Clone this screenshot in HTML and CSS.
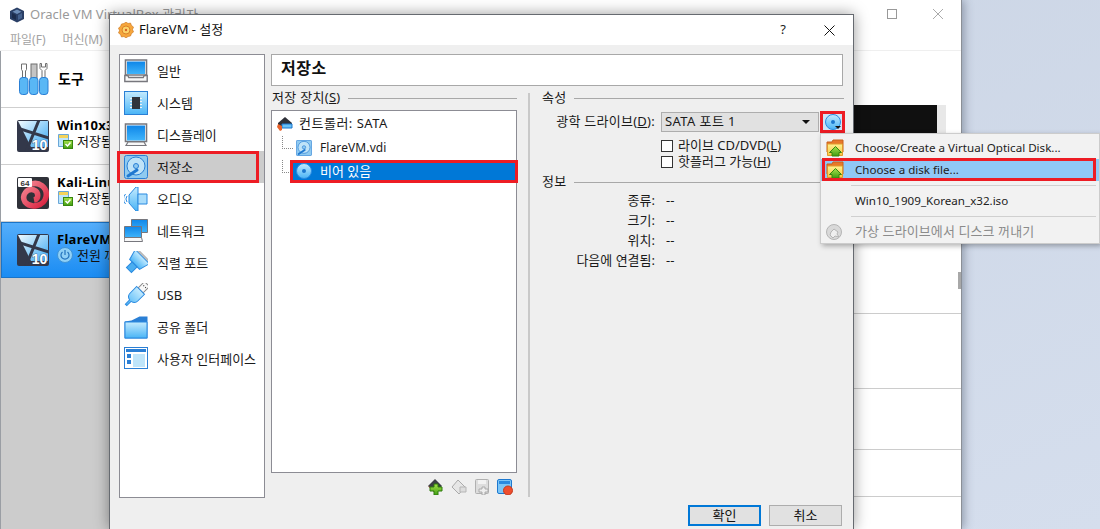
FILE: index.html
```html
<!DOCTYPE html>
<html lang="ko">
<head>
<meta charset="utf-8">
<title>FlareVM - 설정</title>
<link rel="stylesheet" href="styles.css">
</head>
<body>
<svg class="defs" width="0" height="0" aria-hidden="true">
  <defs>
    <linearGradient id="gBlue" x1="0" y1="0" x2="0" y2="1"><stop offset="0" stop-color="#0f86e8"/><stop offset="1" stop-color="#3fb4fb"/></linearGradient>
    <linearGradient id="gSky" x1="0" y1="0" x2="0" y2="1"><stop offset="0" stop-color="#c5ebfe"/><stop offset="1" stop-color="#49b4f6"/></linearGradient>
    <linearGradient id="gTile" x1="0" y1="0" x2="1" y2="1"><stop offset="0" stop-color="#f2fbff"/><stop offset="1" stop-color="#3aa8f2"/></linearGradient>
    <linearGradient id="gGreen" x1="0" y1="0" x2="0" y2="1"><stop offset="0" stop-color="#a8e34a"/><stop offset="1" stop-color="#3f9d12"/></linearGradient>
    <linearGradient id="gFolder" x1="0" y1="0" x2="0" y2="1"><stop offset="0" stop-color="#fff28f"/><stop offset="1" stop-color="#f6c544"/></linearGradient>
    <linearGradient id="gRed" x1="0" y1="0" x2="1" y2="1"><stop offset="0" stop-color="#f58a96"/><stop offset="1" stop-color="#d81f3c"/></linearGradient>

    <symbol id="i-general" viewBox="0 0 24 24"><path d="M1.500 1h21v15h-21z" fill="#fff" stroke="#77777d" stroke-width="1.600"/><rect x="3" y="2.500" width="18" height="12.500" fill="url(#gBlue)"/><path d="M.8 16.500h3l1 2h14.400l1-2h3v6H.8z" fill="#f8f8f8" stroke="#77777d" stroke-width="1.400"/></symbol>
    <symbol id="i-system" viewBox="0 0 24 24"><rect x=".5" y=".5" width="23" height="23" fill="url(#gSky)" stroke="#2a7fd5"/><rect x="8" y="6" width="8" height="12" fill="#30343c"/><path d="M6 7.500h2M6 10.500h2M6 13.500h2M6 16.500h2M16 7.500h2M16 10.500h2M16 13.500h2M16 16.500h2" stroke="#f2f2f2"/></symbol>
    <symbol id="i-display" viewBox="0 0 24 24"><path d="M1.500 1h21v17.500h-21z" fill="#fff" stroke="#77777d" stroke-width="1.600"/><rect x="3" y="2.500" width="18" height="15" fill="url(#gBlue)"/><path d="M4 19h16l2 3.500H2z" fill="#f8f8f8" stroke="#77777d" stroke-width="1.200"/></symbol>
    <symbol id="i-hdd" viewBox="0 0 24 24"><rect x=".5" y=".5" width="23" height="23" rx="2" fill="#8fcaf0" stroke="#2a7fd5"/><circle cx="12" cy="11" r="9" fill="#bfe3f8" stroke="#2a7fd5"/><circle cx="12" cy="11" r="2.500" fill="#8fcaf0" stroke="#2a7fd5"/><path d="M4 21l9-6" stroke="#1f78d0" stroke-width="3" stroke-linecap="round"/></symbol>
    <symbol id="i-audio" viewBox="0 0 24 24"><path d="M5 8l7-8h2v24h-2l-7-8z" fill="url(#gSky)" stroke="#2a8ae0"/><path d="M14 7h9v10h-9z" fill="#a8dcfb" stroke="#2a8ae0"/><path d="M3 9a5 5 0 0 0 0 6M1.500 7a8 8 0 0 0 0 10" fill="none" stroke="#2a8ae0"/></symbol>
    <symbol id="i-network" viewBox="0 0 24 24"><path d="M7.500 .5h16v13h-16z" fill="url(#gBlue)" stroke="#77777d"/><path d="M.5 7.500h17v11H.5z" fill="url(#gBlue)" stroke="#77777d"/><path d="M.5 18.500h17l1 4H0z" fill="#f8f8f8" stroke="#77777d"/></symbol>
    <symbol id="i-serial" viewBox="0 0 24 24"><g transform="rotate(45 12 12)"><path d="M2 3h20l-3 11H5z" fill="url(#gSky)" stroke="#2a8ae0"/><path d="M3 1.500h18" stroke="#b8b8b8" stroke-width="2"/><rect x="8.500" y="14" width="7" height="8" fill="#4aaef0" stroke="#2a8ae0"/></g></symbol>
    <symbol id="i-usb" viewBox="0 0 24 24"><g transform="rotate(45 12 12)"><rect x="8.500" y="-3.500" width="7" height="9" fill="#f8f8f8" stroke="#8a8a8a"/><path d="M10.500 0h1M13 0h1" stroke="#333"/><path d="M6.500 5.500h11V15q0 4-4.500 5v6h-2v-6q-4.500-1-4.500-5z" fill="url(#gSky)" stroke="#2a8ae0"/></g></symbol>
    <symbol id="i-folder" viewBox="0 0 24 24"><path d="M.5 23.500V6.500l7-1 8-4h8v22z" fill="#2a7fd5"/><path d="M1 23V7h22v16z" fill="url(#gSky)" stroke="#2a8ae0"/></symbol>
    <symbol id="i-ui" viewBox="0 0 24 24"><rect x=".5" y=".5" width="23" height="21" fill="#fff" stroke="#2a7fd5"/><rect x="2" y="2" width="20" height="3" fill="#2a7fd5"/><rect x="3" y="7" width="4" height="4" fill="#2a7fd5"/><rect x="3" y="13" width="4" height="4" fill="#2a7fd5"/><rect x="9" y="7" width="12" height="13" fill="#bfe5fa"/></symbol>

    <symbol id="i-disc" viewBox="0 0 16 16"><circle cx="8" cy="8" r="7.500" fill="url(#gSky)" stroke="#2a8ae0"/><circle cx="8" cy="8" r="2" fill="#1c78cf"/></symbol>
    <symbol id="i-open" viewBox="0 0 18 18"><path d="M1 3h5l1-2h10v12H1z" fill="#e8782a" stroke="#c9621a"/><path d="M1.500 5h15v11.500h-15z" fill="url(#gFolder)" stroke="#e09a2a"/><path d="M9.500 7.500l6 6h-2.500v3.500H6v-3.500H3.500z" fill="url(#gGreen)" stroke="#37860f"/></symbol>
    <symbol id="i-eject" viewBox="0 0 16 16"><circle cx="8" cy="8" r="7.500" fill="#d9d9d9" stroke="#b5b5b5"/><path d="M8 5l4 3-1 2 2 3-4-1-2 2-3-3 1-3z" fill="#efefef" stroke="#b5b5b5"/></symbol>
    <symbol id="i-tile" viewBox="0 0 32 32"><rect width="32" height="32" rx="2" fill="#33384a"/><path d="M1 1h30v26H14z" fill="url(#gTile)"/><path d="M0 8l32 10M22 0L9 32" stroke="#33384a" stroke-width="3"/><text x="22.500" y="29.500" class="ten">10</text></symbol>
    <symbol id="i-state" viewBox="0 0 16 16"><path d="M1.500 1.500h10v12h-10z" fill="#bfe6fb" stroke="#6aa7d8"/><path d="M2 2h9v3H2z" fill="#f4d35a"/><rect x="6.500" y="7.500" width="9" height="8" fill="url(#gGreen)" stroke="#37860f"/><path d="M8.500 11l2 2 3-3.500" fill="none" stroke="#fff" stroke-width="1.500"/></symbol>
  </defs>
</svg>

<div class="manager">
  <header class="mgr-title">
    <svg class="mgr-logo" viewBox="0 0 16 16" width="16" height="16"><path d="M8 .5l7 3.500v8l-7 3.500L1 12V4z" fill="#2a3f66"/><path d="M8 2.500l4.500 2.200L8 7 3.500 4.700z" fill="#6d8db8"/><path d="M7 8v5l-4-2V6z" fill="#1c2c4c"/><path d="M9 8v5l4-2V6z" fill="#44618e"/></svg>
    <span class="mgr-name">Oracle VM VirtualBox 관리자</span>
    <span class="spacer"></span>
    <svg class="win-btn" viewBox="0 0 10 10" width="10" height="10"><rect x=".5" y=".5" width="9" height="9" fill="none" stroke="#999"/></svg>
    <svg class="win-btn close-btn" viewBox="0 0 10 10" width="10" height="10"><path d="M0 0l10 10M10 0L0 10" stroke="#aaa"/></svg>
  </header>
  <nav class="mgr-menu"><span>파일(F)</span><span>머신(M)</span></nav>
  <div class="mgr-body">
    <aside class="vm-side">
      <div class="vm-row">
        <svg class="tools-icon" viewBox="0 0 30 32" width="30" height="32"><g stroke="#6f6f6f" fill="#fff"><path d="M2.500 1h5v5.500L6.500 8v7h-3V8L2.500 6.500z"/><rect x="12" y="1" width="6" height="14" fill="#c4c4c4"/><path d="M21 .5v5l2 2v7.500h3V7.500l2-2v-5l-1.500 0v3.500h-4V.5z"/></g><g fill="#59b7f5" stroke="#2a7fd5"><rect x=".5" y="14.500" width="8.500" height="17" rx="3"/><rect x="10.500" y="14.500" width="8.500" height="17" rx="3"/><rect x="20.500" y="14.500" width="8.500" height="17" rx="3"/></g></svg>
        <strong class="tools-name">도구</strong>
      </div>
      <div class="vm-row">
        <svg class="vm-icon" width="32" height="32"><use href="#i-tile"/></svg>
        <div class="vm-text"><strong>Win10x32</strong><span class="vm-state"><svg width="16" height="16"><use href="#i-state"/></svg>저장됨</span></div>
      </div>
      <div class="vm-row">
        <svg class="vm-icon" viewBox="0 0 32 32" width="32" height="32"><rect width="32" height="32" rx="2" fill="#2f3138"/><path d="M12 8C22 3 31 11 29 20 27 29 14 32 8 25 4 18 10 11 17 13 22 15 22 22 17 23" fill="none" stroke="url(#gRed)" stroke-width="5.500"/><rect x="1" y="1" width="14" height="9" rx="1" fill="#fff"/><text x="8" y="8.500" class="sixty4">64</text></svg>
        <div class="vm-text"><strong>Kali-Linux</strong><span class="vm-state"><svg width="16" height="16"><use href="#i-state"/></svg>저장됨</span></div>
      </div>
      <div class="vm-row vm-current">
        <svg class="vm-icon" width="32" height="32"><use href="#i-tile"/></svg>
        <div class="vm-text"><strong>FlareVM</strong><span class="vm-state"><svg viewBox="0 0 16 16" width="16" height="16"><circle cx="8" cy="8" r="7.500" fill="#8fd0f6" stroke="#3f93d6"/><path d="M5.500 5a4 4 0 1 0 5 0M8 3v5" fill="none" stroke="#2272bd" stroke-width="1.200"/></svg>전원 꺼짐</span></div>
      </div>
    </aside>
    <section class="vm-detail">
      <div class="detail-top"><div class="preview"></div><div class="preview-gutter"></div></div>
      <div class="detail-a"></div>
      <div class="detail-b"></div>
      <div class="detail-c"></div>
      <div class="scroll-handle"></div>
    </section>
  </div>
</div>

<div class="dialog">
  <header class="dlg-title">
    <svg class="dlg-logo" viewBox="0 0 16 16" width="16" height="16"><path d="M8 0l2 1.500 2.500-.5 1 2.500 2 1.500-1 2.500 1 2.500-2 1.500-1 2.500L10 14.500 8 16l-2-1.500-2.500.5-1-2.500-2-1.500 1-2.500-1-2.500 2-1.500 1-2.500L6 1.500z" fill="#f6a63c" stroke="#c8701a" stroke-width=".6"/><circle cx="8" cy="8" r="4" fill="#fbd36a" stroke="#d9822b"/><circle cx="8" cy="8" r="1.200" fill="#d9622b"/></svg>
    <span class="dlg-name">FlareVM - 설정</span>
    <span class="spacer"></span>
    <span class="dlg-help">?</span>
    <svg class="dlg-close" viewBox="0 0 11 11" width="11" height="11"><path d="M.5.500l10 10M10.500.500l-10 10" stroke="#111"/></svg>
  </header>
  <div class="dlg-body">
    <ul class="cat-list">
      <li class="cat"><svg width="24" height="24"><use href="#i-general"/></svg>일반</li>
      <li class="cat"><svg width="24" height="24"><use href="#i-system"/></svg>시스템</li>
      <li class="cat"><svg width="24" height="24"><use href="#i-display"/></svg>디스플레이</li>
      <li class="cat cat-on"><svg width="24" height="24"><use href="#i-hdd"/></svg>저장소</li>
      <li class="cat"><svg width="24" height="24"><use href="#i-audio"/></svg>오디오</li>
      <li class="cat"><svg width="24" height="24"><use href="#i-network"/></svg>네트워크</li>
      <li class="cat"><svg width="24" height="24"><use href="#i-serial"/></svg>직렬 포트</li>
      <li class="cat"><svg width="24" height="24"><use href="#i-usb"/></svg>USB</li>
      <li class="cat"><svg width="24" height="24"><use href="#i-folder"/></svg>공유 폴더</li>
      <li class="cat"><svg width="24" height="24"><use href="#i-ui"/></svg>사용자 인터페이스</li>
    </ul>
    <div class="page">
      <div class="page-title">저장소</div>
      <div class="page-cols">
        <div class="store-col">
          <div class="group-head"><span>저장 장치(<u>S</u>)</span></div>
          <div class="tree">
            <div class="node node-root">
              <svg viewBox="0 0 16 16" width="16" height="16"><path d="M8 1l7 6v3H1V7z" fill="#2e3038"/><path d="M5 8h10v4H5z" fill="#69c0f6" stroke="#1d78cf"/><path d="M1 8l4 2v4l-2 1-3-4z" fill="#e8622a"/></svg><span>컨트롤러: SATA</span>
            </div>
            <div class="node node-child node-vdi"><svg viewBox="0 0 16 16" width="16" height="16"><use href="#i-hdd"/></svg><span>FlareVM.vdi</span></div>
            <div class="node node-child node-on"><svg width="16" height="16"><use href="#i-disc"/></svg><span>비어 있음</span></div>
          </div>
          <div class="tree-tools">
            <svg viewBox="0 0 16 16" width="16" height="16"><path d="M7 0l7 7-7 7-7-7z" fill="#3d3f45"/><path d="M0 7l7 7 2-2z" fill="#e8622a"/><path d="M6 5h4v3h4v4h-4v4H6v-4H2V8h4z" fill="url(#gGreen)" stroke="#2f7d0c"/></svg>
            <svg viewBox="0 0 16 16" width="16" height="16"><path d="M7 1l7 7-6 7-7-7z" fill="#e6e6e6" stroke="#aaa"/><path d="M9 8h6v5H9z" fill="#ddd" stroke="#b5b5b5"/></svg>
            <svg viewBox="0 0 16 16" width="16" height="16"><rect x="1.500" y=".5" width="13" height="14" rx="1" fill="#ddd" stroke="#b0b0b0"/><rect x="4" y="1" width="8" height="4" fill="#f2f2f2"/><path d="M8 8h3v2h3v3h-3v3H8v-3H5v-3h3z" fill="#eee" stroke="#aaa"/></svg>
            <svg viewBox="0 0 16 16" width="16" height="16"><rect x=".5" y=".5" width="14" height="14" rx="1.500" fill="#7cc6f7" stroke="#1d78cf"/><rect x="2" y="2" width="11" height="3" fill="#2a8ae0"/><circle cx="11" cy="11.500" r="4.500" fill="#ef4e2e" stroke="#c43a1c"/></svg>
          </div>
        </div>
        <div class="col-rule"></div>
        <div class="props-col">
          <div class="group-head"><span>속성</span></div>
          <div class="form-row drive-row">
            <label class="form-key">광학 드라이브(<u>D</u>):</label>
            <div class="combo"><span>SATA 포트 1</span><i class="combo-arrow"></i></div>
            <button class="disc-btn" type="button"><svg width="16" height="16"><use href="#i-disc"/></svg><i class="disc-arrow"></i></button>
          </div>
          <label class="check"><i class="box"></i><span>라이브 CD/DVD(<u>L</u>)</span></label>
          <label class="check"><i class="box"></i><span>핫플러그 가능(<u>H</u>)</span></label>
          <div class="group-head info-head"><span>정보</span></div>
          <div class="form-row info-row"><span class="form-key">종류:</span><span class="info-val">--</span></div>
          <div class="form-row info-row"><span class="form-key">크기:</span><span class="info-val">--</span></div>
          <div class="form-row info-row"><span class="form-key">위치:</span><span class="info-val">--</span></div>
          <div class="form-row info-row"><span class="form-key">다음에 연결됨:</span><span class="info-val">--</span></div>
        </div>
      </div>
      <div class="dlg-buttons">
        <button class="btn btn-default" type="button">확인</button>
        <button class="btn" type="button">취소</button>
      </div>
    </div>
  </div>
</div>

<div class="popup">
  <div class="pop-item"><svg width="18" height="18"><use href="#i-open"/></svg>Choose/Create a Virtual Optical Disk...</div>
  <div class="pop-item pop-on"><svg width="18" height="18"><use href="#i-open"/></svg>Choose a disk file...</div>
  <div class="pop-sep"></div>
  <div class="pop-item"><span class="pop-noicon"></span>Win10_1909_Korean_x32.iso</div>
  <div class="pop-sep"></div>
  <div class="pop-item pop-off"><svg width="16" height="16"><use href="#i-eject"/></svg>가상 드라이브에서 디스크 꺼내기</div>
</div>
</body>
</html>
```

FILE: styles.css
```css
* { box-sizing: border-box; }
html, body { height: 100%; }
body {
  margin: 0;
  overflow: hidden;
  position: relative;
  background: linear-gradient(160deg, #c9d3e3, #d5deed);
  font: 13px/1.2 "Noto Sans", "Noto Sans CJK KR", sans-serif;
  color: #1a1a1a;
}
.defs { position: absolute; }
.spacer { flex: 1; }
ul { margin: 0; padding: 0; list-style: none; }
svg { display: block; flex: none; }
.ten { font: bold 14px "Liberation Sans", sans-serif; fill: #fff; stroke: #33384a; stroke-width: .6px; paint-order: stroke; text-anchor: middle; }
.sixty4 { font: bold 8px "Liberation Sans", sans-serif; fill: #333; text-anchor: middle; }

/* manager window */
.manager {
  position: absolute;
  left: 0; top: 0;
  width: 962px; height: 529px;
  display: flex;
  flex-direction: column;
  background: #fff;
  border-right: 1px solid #8b8f96;
  box-shadow: 2px 0 9px rgba(60, 70, 90, .45);
}
.mgr-title { height: 30px; display: flex; align-items: center; padding-left: 9px; flex: none; }
.mgr-logo { margin-right: 5px; }
.mgr-name { color: #9a9a9a; font-size: 13px; }
.win-btn { margin-right: 65px; margin-top: -2px; }
.close-btn { margin-right: 18px; margin-left: -29px; }
.mgr-menu {
  height: 21px; flex: none;
  display: flex; gap: 17px;
  padding: 3px 0 0 10px;
  color: #a3a3a3; font-size: 12px;
  border-bottom: 1px solid #efefef;
}
.mgr-body { flex: 1; display: flex; min-height: 0; }
.vm-side { width: 110px; background: #ccc; flex: none; border-left: 1px solid #9a9ea4; }
.vm-row {
  height: 57px;
  background: #fff;
  border-bottom: 1px solid #cfcfcf;
  display: flex; align-items: center;
  padding-left: 16px;
  gap: 8px;
  white-space: nowrap;
  overflow: hidden;
}
.tools-icon { margin-left: 2px; margin-right: 1px; }
.tools-name { font-size: 14px; color: #000; }
.vm-current { height: 56px; background: linear-gradient(#55aefb, #1a8cf3); border: 1px solid #1a74c8; padding-left: 15px; }
.vm-icon { flex: none; }
.vm-text { display: flex; flex-direction: column; margin-top: -5px; }
.vm-text strong { font-size: 13px; letter-spacing: .3px; line-height: 15px; color: #000; }
.vm-state { display: flex; align-items: center; gap: 4px; font-size: 13px; line-height: 16px; color: #111; }
.vm-detail { flex: 1; display: flex; flex-direction: column; position: relative; }
.detail-top { height: 263px; display: flex; justify-content: flex-end; padding: 54px 15px 0 0; border-bottom: 1px solid #ccc; }
.preview { width: 200px; height: 100px; background: #101010; }
.preview-gutter { width: 9px; height: 100px; background: #e8e8e8; }
.detail-a { height: 75px; border-bottom: 1px solid #ccc; }
.detail-b { height: 61px; border-bottom: 1px solid #ccc; }
.detail-c { height: 47px; border-bottom: 1px solid #ccc; }
.scroll-handle { position: absolute; right: 0; top: 221px; width: 3px; height: 17px; background: #a8a8a8; }

/* settings dialog */
.dialog {
  position: absolute;
  left: 109px; top: 14px;
  width: 745px; height: 515px;
  display: flex;
  flex-direction: column;
  background: #efefef;
  border: 1px solid #666a70;
  border-bottom: 0;
  box-shadow: 0 0 14px rgba(0, 0, 0, .4);
}
.dlg-title { height: 30px; flex: none; background: #fff; display: flex; align-items: center; padding-left: 8px; }
.dlg-logo { margin-right: 5px; }
.dlg-name { font-size: 13px; color: #111; }
.dlg-help { font-size: 13px; margin-right: 38px; }
.dlg-close { margin-right: 18px; }
.dlg-body { flex: 1; display: flex; gap: 6px; padding: 9px 10px 0 9px; min-height: 0; }
.cat-list { width: 146px; height: 444px; flex: none; background: #fff; border: 1px solid #8c8c94; }
.cat { height: 32px; display: flex; align-items: center; gap: 9px; padding: 0 0 0 4px; line-height: 17px; position: relative; white-space: nowrap; }
.cat-on { background: #ccc; }
.cat-on::after { content: ""; position: absolute; left: -3px; right: 5px; top: 0; bottom: 0; border: 3px solid #ed1c24; }
.page { flex: 1; display: flex; flex-direction: column; min-width: 0; }
.page-title { height: 32px; flex: none; background: #fff; border: 1px solid #a8a8a8; padding: 4px 9px; font-size: 16px; letter-spacing: .5px; font-weight: 700; color: #111; }
.page-cols { flex: 1; display: flex; min-height: 0; }
.store-col { width: 246px; flex: none; display: flex; flex-direction: column; }
.group-head { height: 24px; flex: none; display: flex; align-items: center; gap: 7px; letter-spacing: .3px; padding-left: 1px; }
.group-head::after { content: ""; flex: 1; height: 1px; background: #a8a8a8; }
.tree { height: 363px; flex: none; background: #fff; border: 1px solid #8c8c94; position: relative; padding-top: 1px; }
.node { height: 24px; display: flex; align-items: center; gap: 6px; white-space: nowrap; position: relative; }
.node-root { padding-left: 5px; letter-spacing: .5px; }
.node-child { margin-left: 20px; padding-left: 4px; gap: 8px; }
.node-vdi { font-size: 12px; letter-spacing: .1px; }
.node-child::before { content: ""; position: absolute; left: -10px; top: 0; width: 10px; height: 12px; border-left: 1px dotted #888; border-bottom: 1px dotted #888; }
.node-on { background: #0078d7; color: #fff; height: 22px; }
.node-on > span { padding-top: 1px; }
.node-on::after { content: ""; position: absolute; left: -2px; right: -2px; top: 0; bottom: -1px; border: 3px solid #ed1c24; }
.tree-tools { display: flex; justify-content: flex-end; gap: 7px; padding: 6px 4px 0 0; }
.col-rule { width: 2px; height: 404px; margin: 7px 12px 0 11px; flex: none; background: #c9c9c9; }
.props-col { flex: 1; min-width: 0; display: flex; flex-direction: column; }
.props-col .group-head { margin-right: -1px; padding-left: 0; }
.form-row { display: flex; align-items: center; }
.form-key { width: 113px; flex: none; text-align: right; white-space: nowrap; }
.drive-row { height: 20px; margin-top: 2px; gap: 6px; white-space: nowrap; }
.drive-row .form-key { letter-spacing: .25px; }
.combo { width: 158px; height: 20px; background: #e1e1e1; border: 1px solid #adadad; display: flex; align-items: center; padding: 0 4px 0 3px; justify-content: space-between; letter-spacing: .4px; }
.combo-arrow { width: 0; height: 0; border: 4px solid transparent; border-top: 4px solid #111; border-bottom: 0; margin-right: 4px; }
.disc-btn {
  width: 25px; height: 22px; padding: 0; margin: 0 -3px 0 -5px;
  background: #cfe5f6; border: 3px solid #ed1c24;
  display: flex; align-items: center; justify-content: center; position: relative;
}
.disc-arrow { position: absolute; right: 1px; bottom: 1px; width: 0; height: 0; border: 3px solid transparent; border-top: 3px solid #111; border-bottom: 0; }
.check { display: flex; align-items: center; gap: 5px; height: 16px; padding-left: 119px; white-space: nowrap; }
.check:nth-of-type(1) { margin-top: 6px; }
.box { width: 12px; height: 12px; background: #fff; border: 1px solid #333; flex: none; }
.info-head { margin-bottom: -3px; }
.info-row { height: 20px; }
.info-val { margin-left: 11px; }
.dlg-buttons { height: 31px; flex: none; display: flex; justify-content: flex-end; gap: 8px; padding: 0 1px 3px 0; align-items: flex-end; }
.btn { width: 73px; height: 21px; padding: 0; background: #e1e1e1; border: 1px solid #adadad; font: inherit; color: #111; }
.btn-default { border: 2px solid #0078d7; }

/* popup menu */
.popup {
  position: absolute;
  left: 820px; top: 133px;
  width: 280px; height: 111px;
  padding-top: 3px;
  background: #f2f2f2;
  border: 1px solid #ccc;
  box-shadow: 2px 2px 5px rgba(0, 0, 0, .3);
  font-size: 11.6px;
}
.pop-item { height: 22px; display: flex; align-items: center; gap: 11px; padding-left: 5px; white-space: nowrap; position: relative; color: #222; }
.pop-noicon { width: 18px; flex: none; }
.pop-on { background: #90c8f6; }
.pop-on::after { content: ""; position: absolute; left: 1px; right: 3px; top: -1px; bottom: 0; border: 3px solid #ed1c24; }
.pop-sep { height: 1px; background: #d0d0d0; margin: 4px 3px 4px 30px; }
.pop-off { color: #8b8b8b; padding-left: 5px; gap: 13px; font-size: 13px; letter-spacing: .1px; }
```
